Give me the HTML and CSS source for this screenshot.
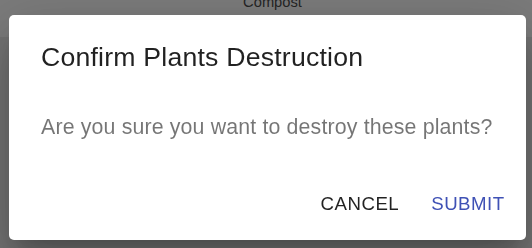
FILE: index.html
```html
<!DOCTYPE html>
<html lang="en">
<head>
<meta charset="utf-8">
<title>Confirm Plants Destruction</title>
<link rel="stylesheet" href="styles.css">
</head>
<body>
<div class="page">
  <header class="appbar">
    <div class="appbar-title">Compost</div>
  </header>
  <main class="content"></main>
</div>
<div class="backdrop">
  <div class="dialog" role="dialog" aria-labelledby="dlg-title">
    <h2 class="dialog-title" id="dlg-title">Confirm Plants Destruction</h2>
    <div class="dialog-content">
      <p class="dialog-text">Are you sure you want to destroy these plants?</p>
    </div>
    <div class="dialog-actions">
      <button class="btn btn-default" type="button">Cancel</button>
      <button class="btn btn-primary" type="button">Submit</button>
    </div>
  </div>
</div>
</body>
</html>
```
FILE: styles.css
```css
html, body {
  margin: 0;
  padding: 0;
  height: 100%;
}
body {
  font-family: "Liberation Sans", Arial, Helvetica, sans-serif;
  background: #e6e6e6;
  overflow: hidden;
}
.page {
  display: flex;
  flex-direction: column;
  height: 100%;
}
.appbar {
  height: 37px;
  background: #f6f6f6;
  overflow: hidden;
  flex: none;
}
.appbar-title {
  margin-top: -8px;
  padding-left: 13px;
  text-align: center;
  font-size: 14.7px;
  line-height: 20px;
  color: #4a4a4a;
}
.content {
  flex: 1;
}
.backdrop {
  position: fixed;
  inset: 0;
  background: rgba(0, 0, 0, 0.5);
  display: flex;
  align-items: flex-start;
  padding: 15px 0 0 9px;
}
.dialog {
  width: 517px;
  background: #fff;
  border-radius: 5px;
  box-shadow: 0 15px 20px -9px rgba(0,0,0,0.2),
              0 32px 51px 4px rgba(0,0,0,0.14),
              0 12px 61px 11px rgba(0,0,0,0.12);
  display: flex;
  flex-direction: column;
}
.dialog-title {
  margin: 0;
  padding: 21.33px 32px;
  font-size: 26.67px;
  font-weight: 400;
  line-height: 42.67px;
  letter-spacing: 0.2px;
  color: rgba(0, 0, 0, 0.87);
}
.dialog-content {
  padding: 10.67px 20px 10.67px 32px;
}
.dialog-text {
  margin: 0 0 16px;
  font-size: 21.33px;
  line-height: 32px;
  letter-spacing: 0.15px;
  white-space: nowrap;
  color: rgba(0, 0, 0, 0.54);
}
.dialog-actions {
  display: flex;
  justify-content: flex-end;
  align-items: center;
  gap: 10.67px;
  padding: 10.67px;
}
.btn {
  font-family: inherit;
  min-width: 85.33px;
  padding: 8px 10.67px;
  border: 0;
  background: transparent;
  border-radius: 5px;
  font-size: 18.67px;
  line-height: 32.67px;
  letter-spacing: 0.5px;
  text-transform: uppercase;
  font-weight: 400;
  cursor: pointer;
}
.btn-default {
  color: rgba(0, 0, 0, 0.87);
}
.btn-primary {
  color: #3f51b5;
}
```
